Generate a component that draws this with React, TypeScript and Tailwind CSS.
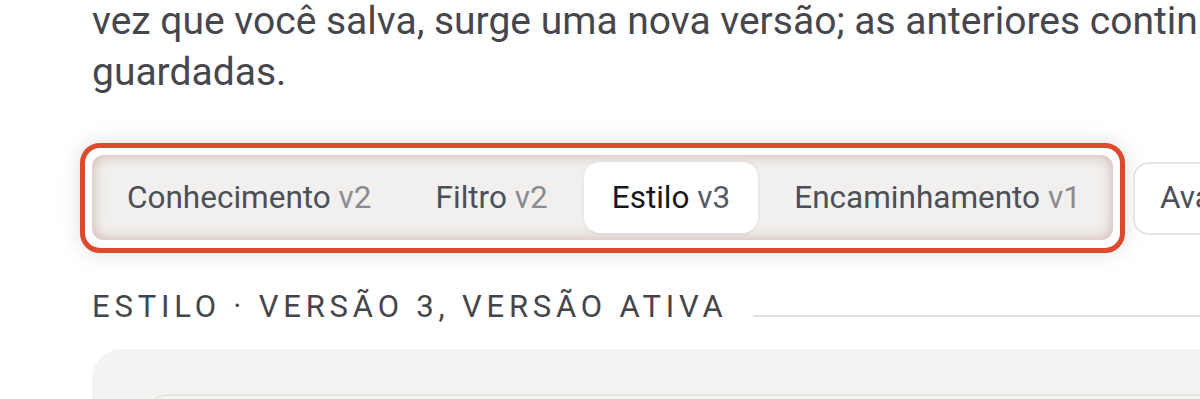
import React from "react";

const tabs = [
  { name: "Conhecimento", v: "v2", active: false },
  { name: "Filtro", v: "v2", active: false },
  { name: "Estilo", v: "v3", active: true },
  { name: "Encaminhamento", v: "v1", active: false },
];

export default function App() {
  return (
    <div
      className="w-[1200px] h-[399px] overflow-hidden bg-white"
      style={{ fontFamily: "Roboto, 'Liberation Sans', sans-serif" }}
    >
      <div className="pl-[92px] w-[1500px]">
        <p className="mt-[-4px] w-[1250px] text-[39px] leading-[51px] text-[#46464d]">
          vez que você salva, surge uma nova versão; as anteriores continuam guardadas.
        </p>

        <div className="mt-[45px] ml-[-12px] flex items-center gap-[8px]">
          <div className="rounded-[20px] border-[5px] border-[#dc4a2e] bg-white p-[7px] pb-[8px] shadow-[0_0_22px_rgba(0,0,0,0.13)]">
            <div className="flex items-center gap-[8px] rounded-[12px] bg-[#f1f0ee] p-[7px] pr-[4px] shadow-[inset_0_0_14px_rgba(165,95,80,0.45)]">
              {tabs.map((t) => (
                <div
                  key={t.name}
                  className={
                    t.active
                      ? "h-[71px] flex items-center px-[28px] rounded-[16px] bg-white shadow-[0_1px_4px_rgba(0,0,0,0.08)] text-[31.5px] text-[#16181d] whitespace-pre"
                      : "h-[71px] flex items-center px-[28px] rounded-[16px] text-[31.5px] text-[#4b4f58] whitespace-pre"
                  }
                >
                  <span>{t.name} </span>
                  <span className={t.active ? "text-[#545a66]" : "text-[#8a8b8e]"}>{t.v}</span>
                </div>
              ))}
            </div>
          </div>
          <div className="h-[73px] flex items-center pl-[25px] pr-[40px] rounded-[16px] border-2 border-[#e4e4e2] bg-white text-[31.5px] text-[#4b4f58] whitespace-nowrap">
            Avançado
          </div>
        </div>

        <div className="mt-[38px] flex items-start w-[1108px]">
          <div className="text-[31px] leading-[32px] tracking-[0.155em] uppercase text-[#45454c] whitespace-nowrap">
            Estilo · Versão 3, versão ativa
          </div>
          <div className="ml-[25px] flex-1 h-[2px] bg-[#e3e3e1] mt-[24px]" />
        </div>

        <div className="mt-[26px] w-[1200px] h-[120px] rounded-tl-[30px] bg-[#f3f3f1] pt-[45px] pl-[55px]">
          <div className="h-[60px] rounded-tl-[20px] border-t-2 border-l-2 border-[#e5e5e2] bg-[#f6f6f4]" />
        </div>
      </div>
    </div>
  );
}
